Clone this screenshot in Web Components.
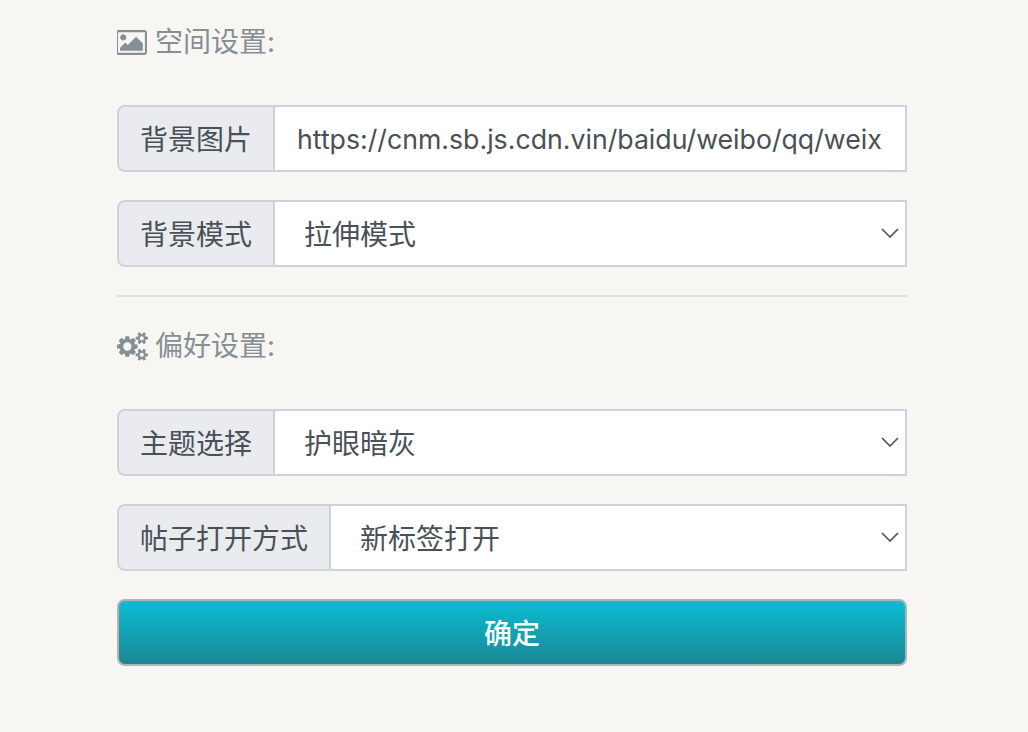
<!DOCTYPE html>
<html lang="zh-CN">
<head>
<meta charset="utf-8">
<title>设置</title>
<style>
    html, body {
        margin: 0;
        background: #f7f6f3;
    }
    body {
        font-family: Inter, "Noto Sans CJK SC", sans-serif;
        font-size: 28px;
        color: #495057;
    }
</style>
</head>
<body>
<settings-panel>
    <section-title icon="picture">空间设置:</section-title>
    <field-row label="背景图片">
        <text-field>https://cnm.sb.js.cdn.vin/baidu/weibo/qq/weix</text-field>
    </field-row>
    <field-row label="背景模式">
        <select-field>拉伸模式</select-field>
    </field-row>
    <panel-divider></panel-divider>
    <section-title icon="cogs">偏好设置:</section-title>
    <field-row label="主题选择">
        <select-field>护眼暗灰</select-field>
    </field-row>
    <field-row label="帖子打开方式">
        <select-field>新标签打开</select-field>
    </field-row>
    <submit-button>确定</submit-button>
</settings-panel>

<script>
const ICONS = {
    picture: "M576 576q0 80-56 136t-136 56-136-56-56-136 56-136 136-56 136 56 56 136zm1024 384v448h-1408v-192l320-320 160 160 512-512zm96-704h-1600q-13 0-22.500 9.500t-9.500 22.500v1216q0 13 9.500 22.500t22.500 9.500h1600q13 0 22.500-9.500t9.500-22.500v-1216q0-13-9.500-22.500t-22.500-9.500zm160 32v1216q0 66-47 113t-113 47h-1600q-66 0-113-47t-47-113v-1216q0-66 47-113t113-47h1600q66 0 113 47t47 113z",
    cogs: "M896 896q0-106-75-181t-181-75-181 75-75 181 75 181 181 75 181-75 75-181zm768 512q0-52-38-90t-90-38-90 38-38 90q0 53 37.500 90.500t90.500 37.500 90.500-37.500 37.500-90.500zm0-1024q0-52-38-90t-90-38-90 38-38 90q0 53 37.500 90.500t90.500 37.500 90.500-37.500 37.500-90.500zm-384 421v185q0 10-7 19.500t-16 10.500l-155 24q-11 35-32 76 34 48 90 115 7 11 7 20 0 12-7 19-23 30-82.500 89.500t-78.500 59.500q-11 0-21-7l-115-90q-37 19-77 31-11 108-23 155-7 24-30 24h-186q-11 0-20-7.500t-10-17.500l-23-153q-34-10-75-31l-118 89q-7 7-20 7-11 0-21-8-144-133-144-160 0-9 7-19 10-14 41-53t47-61q-23-44-35-82l-152-24q-10-1-17-9.500t-7-19.500v-185q0-10 7-19.500t16-10.500l155-24q11-35 32-76-34-48-90-115-7-11-7-20 0-12 7-20 22-30 82-89t79-59q11 0 21 7l115 90q34-18 77-32 11-108 23-154 7-24 30-24h186q11 0 20 7.500t10 17.500l23 153q34 10 75 31l118-89q8-7 20-7 11 0 21 8 144 133 144 160 0 8-7 19-12 16-42 54t-45 60q23 48 34 82l152 23q10 2 17 10.500t7 19.500zm640 533v140q0 16-149 31-12 27-30 52 51 113 51 138 0 4-4 7-122 71-124 71-8 0-46-47t-52-68q-20 2-30 2t-30-2q-14 21-52 68t-46 47q-2 0-124-71-4-3-4-7 0-25 51-138-18-25-30-52-149-15-149-31v-140q0-16 149-31 13-29 30-52-51-113-51-138 0-4 4-7 4-2 35-20t59-34 30-16q8 0 46 46.500t52 67.500q20-2 30-2t30 2q51-71 92-112l6-2q4 0 124 70 4 3 4 7 0 25-51 138 17 23 30 52 149 15 149 31zm0-1024v140q0 16-149 31-12 27-30 52 51 113 51 138 0 4-4 7-122 71-124 71-8 0-46-47t-52-68q-20 2-30 2t-30-2q-14 21-52 68t-46 47q-2 0-124-71-4-3-4-7 0-25 51-138-18-25-30-52-149-15-149-31v-140q0-16 149-31 13-29 30-52-51-113-51-138 0-4 4-7 4-2 35-20t59-34 30-16q8 0 46 46.500t52 67.500q20-2 30-2t30 2q51-71 92-112l6-2q4 0 124 70 4 3 4 7 0 25-51 138 17 23 30 52 149 15 149 31z"
};

class SettingsPanel extends HTMLElement {
    constructor() {
        super();
        this.attachShadow({ mode: "open" });
        this.shadowRoot.innerHTML = `
            <style>
                :host {
                    display: flex;
                    flex-direction: column;
                    gap: 28px;
                    box-sizing: border-box;
                    width: 1028px;
                    height: 732px;
                    padding: 21px 121px 0 117px;
                    overflow: hidden;
                }
            </style>
            <slot></slot>
        `;
    }
}

class SectionTitle extends HTMLElement {
    constructor() {
        super();
        this.attachShadow({ mode: "open" });
    }

    connectedCallback() {
        const path = ICONS[this.getAttribute("icon")];
        this.shadowRoot.innerHTML = `
            <style>
                :host {
                    display: flex;
                    align-items: center;
                    gap: 7px;
                    height: 42px;
                    margin-bottom: 14px;
                    color: #868e96;
                    font-size: 28px;
                    white-space: nowrap;
                }
                svg {
                    width: 31px;
                    height: 29px;
                    fill: currentColor;
                    flex: none;
                }
                span {
                    padding-bottom: 4px;
                }
            </style>
            <svg viewBox="0 0 1920 1792"><path d="${path}"/></svg>
            <span><slot></slot></span>
        `;
    }
}

class FieldRow extends HTMLElement {
    constructor() {
        super();
        this.attachShadow({ mode: "open" });
    }

    connectedCallback() {
        this.shadowRoot.innerHTML = `
            <style>
                :host {
                    display: flex;
                    box-sizing: border-box;
                    height: 67px;
                }
                .label {
                    display: flex;
                    align-items: center;
                    flex: none;
                    padding: 0 21px 2px;
                    background: #e9ebef;
                    border: 2px solid #cdd3db;
                    border-radius: 8px 0 0 8px;
                    white-space: nowrap;
                }
            </style>
            <div class="label">${this.getAttribute("label")}</div>
            <slot></slot>
        `;
    }
}

class TextField extends HTMLElement {
    constructor() {
        super();
        this.attachShadow({ mode: "open" });
        this.shadowRoot.innerHTML = `
            <style>
                :host {
                    display: flex;
                    align-items: center;
                    flex: 1;
                    min-width: 0;
                    box-sizing: border-box;
                    margin-left: -2px;
                    padding: 0 20px 0 22px;
                    background: #fff;
                    border: 2px solid #cdd3db;
                }
                div {
                    white-space: nowrap;
                    font-size: 26.7px;
                }
            </style>
            <div><slot></slot></div>
        `;
    }
}

class SelectField extends HTMLElement {
    constructor() {
        super();
        this.attachShadow({ mode: "open" });
        this.shadowRoot.innerHTML = `
            <style>
                :host {
                    display: flex;
                    align-items: center;
                    justify-content: space-between;
                    flex: 1;
                    min-width: 0;
                    box-sizing: border-box;
                    margin-left: -2px;
                    padding: 0 6px 0 29px;
                    background: #fff;
                    border: 2px solid #cdd3db;
                }
                span {
                    padding-bottom: 2px;
                }
                svg {
                    width: 18px;
                    height: 10px;
                    margin-top: -2px;
                    fill: none;
                    stroke: #495057;
                    stroke-width: 1.6;
                }
            </style>
            <span><slot></slot></span>
            <svg viewBox="0 0 18 10"><path d="M1 1l8 8 8-8"/></svg>
        `;
    }
}

class PanelDivider extends HTMLElement {
    constructor() {
        super();
        this.attachShadow({ mode: "open" });
        this.shadowRoot.innerHTML = `
            <style>
                :host {
                    display: block;
                    height: 2px;
                    background: #e3e2de;
                }
            </style>
        `;
    }
}

class SubmitButton extends HTMLElement {
    constructor() {
        super();
        this.attachShadow({ mode: "open" });
        this.shadowRoot.innerHTML = `
            <style>
                :host {
                    display: flex;
                    align-items: center;
                    justify-content: center;
                    box-sizing: border-box;
                    height: 67px;
                    padding-bottom: 2px;
                    color: #fff;
                    font-weight: 500;
                    background: linear-gradient(#0abcd1, #1b8794);
                    border: 2px solid #b0b4b5;
                    border-radius: 8px;
                    cursor: pointer;
                }
            </style>
            <slot></slot>
        `;
    }
}

customElements.define("settings-panel", SettingsPanel);
customElements.define("section-title", SectionTitle);
customElements.define("field-row", FieldRow);
customElements.define("text-field", TextField);
customElements.define("select-field", SelectField);
customElements.define("panel-divider", PanelDivider);
customElements.define("submit-button", SubmitButton);
</script>
</body>
</html>
